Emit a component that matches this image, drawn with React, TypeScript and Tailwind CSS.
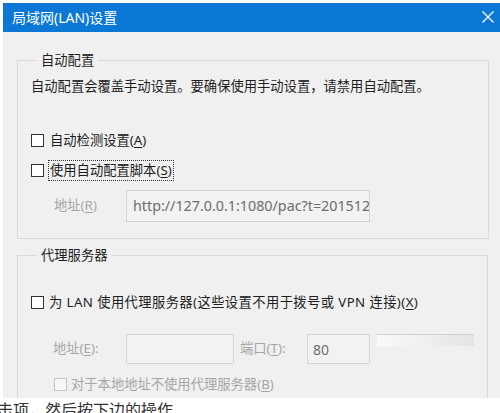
import React from 'react';

const cjk = { fontFamily: '"Noto Sans", "Noto Sans CJK SC", sans-serif' };

function Check({ disabled }: { disabled?: boolean }) {
  return (
    <span
      className={
        'inline-block w-[13px] h-[13px] shrink-0 border ' +
        (disabled ? 'border-[#c4c4c4] bg-[#f7f7f7]' : 'border-[#333] bg-white')
      }
    />
  );
}

function Key({ k }: { k: string }) {
  return (
    <>
      (<span className="underline underline-offset-2">{k}</span>)
    </>
  );
}

export default function App() {
  return (
    <div className="w-[500px] h-[413px] overflow-hidden bg-white text-[#1e1e1e]" style={cjk}>
      <div className="pl-[3px] pt-[3px]">
        <div className="h-[395px] overflow-hidden bg-[#f0f0f0] flex flex-col">
          {/* title bar */}
          <div className="h-[29px] bg-[#0b78d6] flex items-center justify-between pl-[9px] pr-[5px] shrink-0">
            <span className="text-white text-[14px] leading-none">局域网(LAN)设置</span>
            <svg width="14" height="14" viewBox="0 0 14 14" className="mb-[1px]">
              <path d="M1.5 1.5 L12.5 12.5 M12.5 1.5 L1.5 12.5" stroke="#ffffff" strokeWidth="1.3" />
            </svg>
          </div>

          <div className="pt-[19px] pl-[14px] pr-[11px] text-[13.3px]">
            {/* 自动配置 */}
            <fieldset className="border border-[#d9d9d9] pl-[13px] pb-[16px]">
              <legend className="ml-[6px] px-[4px] leading-[18px]">自动配置</legend>
              <div className="mt-[8px] h-[18px] leading-[18px]">
                自动配置会覆盖手动设置。要确保使用手动设置，请禁用自动配置。
              </div>
              <div className="mt-[36px] h-[18px] flex items-center gap-[6px]">
                <Check />
                <span className="leading-[18px]">
                  自动检测设置<Key k="A" />
                </span>
              </div>
              <div className="mt-[11px] h-[21px] flex items-center gap-[4px]">
                <Check />
                <span className="leading-[19px] px-[1px] border border-dotted border-[#333]">
                  使用自动配置脚本<Key k="S" />
                </span>
              </div>
              <div className="mt-[9px] h-[32px] flex items-center">
                <span className="ml-[23px] w-[72px] text-[#a6a6a6]">
                  地址<Key k="R" />
                </span>
                <div className="w-[244px] h-[32px] border border-[#d4d4d4] bg-[#f2f2f2] flex items-center pl-[6px] overflow-hidden">
                  <span className="text-[14.3px] text-[#6d6d6d] whitespace-nowrap">
                    http://127.0.0.1:1080/pac?t=20151230
                  </span>
                </div>
              </div>
            </fieldset>

            {/* 代理服务器 */}
            <fieldset className="mt-[7px] border border-[#d9d9d9] pl-[13px] pb-[16px] w-[471px]">
              <legend className="ml-[6px] px-[4px] leading-[18px]">代理服务器</legend>
              <div className="mt-[29px] h-[18px] flex items-center gap-[5px]">
                <Check />
                <span className="leading-[18px] tracking-[0.4px] whitespace-nowrap">
                  为 LAN 使用代理服务器(这些设置不用于拨号或 VPN 连接)<Key k="X" />
                </span>
              </div>
              <div className="mt-[23px] h-[30px] flex items-center">
                <span className="ml-[22px] w-[73px] text-[#a6a6a6]">
                  地址<Key k="E" />:
                </span>
                <div className="w-[108px] h-[30px] border border-[#d4d4d4] bg-[#f2f2f2]" />
                <span className="ml-[6px] w-[67px] text-[#a6a6a6]">
                  端口<Key k="T" />:
                </span>
                <div className="w-[63px] h-[30px] border border-[#d4d4d4] bg-[#f2f2f2] flex items-center pl-[5px]">
                  <span className="text-[14px] text-[#6d6d6d]">80</span>
                </div>
                <div className="self-start ml-[7px] w-[97px] h-[12px] border-t border-[#d0d0d0] bg-gradient-to-r from-[#fafafa] to-[#e4e4e4]" />
              </div>
              <div className="mt-[11px] h-[18px] flex items-center gap-[4px] ml-[23px]">
                <Check disabled />
                <span className="leading-[18px] text-[#a6a6a6]">
                  对于本地地址不使用代理服务器<Key k="B" />
                </span>
              </div>
            </fieldset>
          </div>
        </div>
      </div>
      <div className="-ml-[3px] text-[16px] leading-[24px] text-[#333] whitespace-nowrap">
        击项，然后按下边的操作
      </div>
    </div>
  );
}
